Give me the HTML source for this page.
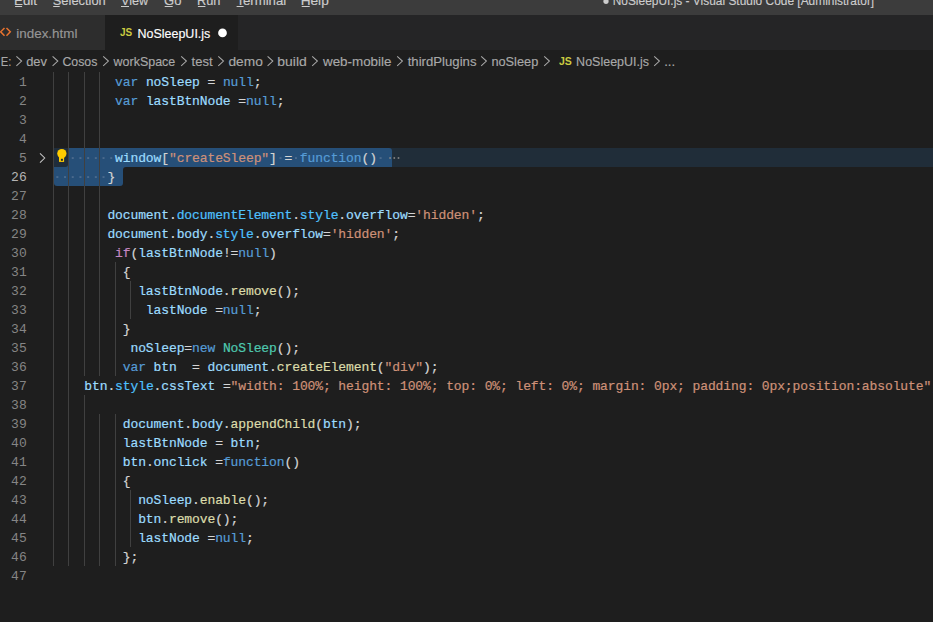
<!DOCTYPE html><html><head><meta charset="utf-8"><style>
*{margin:0;padding:0;box-sizing:border-box}
html,body{width:933px;height:622px;overflow:hidden;background:#1e1e1e}
body{position:relative;font-family:"Liberation Sans",sans-serif}
.a{position:absolute;white-space:pre}
.code{position:absolute;font-family:"Liberation Mono",monospace;font-size:13px;letter-spacing:-0.103px;line-height:19px;white-space:pre;height:19px;-webkit-text-stroke:0.2px}
.ln{position:absolute;left:0;width:26.7px;text-align:right;font-family:"Liberation Mono",monospace;font-size:13px;line-height:19px;color:#858585}
.g{position:absolute;width:1px;background:#404040}
svg{position:absolute;left:0;top:0;overflow:visible}
</style></head><body>
<div class="a" style="left:0;top:0;width:933px;height:15px;background:#3c3c3c"></div>
<div class="a" style="left:0;top:15px;width:933px;height:35px;background:#252526"></div>
<div class="a" style="left:0;top:15px;width:105px;height:35px;background:#2d2d2d"></div>
<div class="a" style="left:105px;top:15px;width:133px;height:35px;background:#1e1e1e"></div>
<div class="a" style="left:53px;top:148px;width:880px;height:19px;background:#202d39"></div>
<div class="a" style="left:68px;top:148px;width:323.6px;height:19px;background:#264f78;border-radius:0 3px 0 0"></div>
<div class="a" style="left:54px;top:167px;width:69px;height:19px;background:#264f78;border-radius:0 0 3px 3px"></div>
<div class="g" style="left:53.00px;top:72px;height:494px"></div>
<div class="g" style="left:68.00px;top:72px;height:494px"></div>
<div class="g" style="left:84.00px;top:72px;height:304px"></div>
<div class="g" style="left:84.00px;top:395px;height:171px"></div>
<div class="g" style="left:99.00px;top:72px;height:304px"></div>
<div class="g" style="left:99.00px;top:414px;height:152px"></div>
<div class="g" style="left:115.00px;top:262px;height:114px"></div>
<div class="g" style="left:115.00px;top:414px;height:152px"></div>
<div class="g" style="left:130.00px;top:281px;height:38px"></div>
<div class="g" style="left:130.00px;top:490px;height:57px"></div>
<div class="ln" style="top:73px">1</div>
<div class="code" style="left:115.08px;top:73px"><span style="color:#569cd6">var</span><span style="color:#d4d4d4"> </span><span style="color:#9cdcfe">noSleep</span><span style="color:#d4d4d4"> = </span><span style="color:#569cd6">null</span><span style="color:#d4d4d4">;</span></div>
<div class="ln" style="top:92px">2</div>
<div class="code" style="left:115.08px;top:92px"><span style="color:#569cd6">var</span><span style="color:#d4d4d4"> </span><span style="color:#9cdcfe">lastBtnNode</span><span style="color:#d4d4d4"> =</span><span style="color:#569cd6">null</span><span style="color:#d4d4d4">;</span></div>
<div class="ln" style="top:111px">3</div>
<div class="ln" style="top:130px">4</div>
<div class="ln" style="top:149px">5</div>
<div class="code" style="left:115.08px;top:149px"><span style="color:#9cdcfe">window</span><span style="color:#d4d4d4">[</span><span style="color:#ce9178">&quot;createSleep&quot;</span><span style="color:#d4d4d4">] = </span><span style="color:#569cd6">function</span><span style="color:#d4d4d4">()</span></div>
<div class="ln" style="top:168px;color:#b4b4b4">26</div>
<div class="code" style="left:107.38px;top:168px"><span style="color:#d4d4d4">}</span></div>
<div class="ln" style="top:187px">27</div>
<div class="ln" style="top:206px">28</div>
<div class="code" style="left:107.38px;top:206px"><span style="color:#9cdcfe">document</span><span style="color:#d4d4d4">.</span><span style="color:#4fc1ff">documentElement</span><span style="color:#d4d4d4">.</span><span style="color:#4fc1ff">style</span><span style="color:#d4d4d4">.</span><span style="color:#9cdcfe">overflow</span><span style="color:#d4d4d4">=</span><span style="color:#ce9178">&#x27;hidden&#x27;</span><span style="color:#d4d4d4">;</span></div>
<div class="ln" style="top:225px">29</div>
<div class="code" style="left:107.38px;top:225px"><span style="color:#9cdcfe">document</span><span style="color:#d4d4d4">.</span><span style="color:#9cdcfe">body</span><span style="color:#d4d4d4">.</span><span style="color:#4fc1ff">style</span><span style="color:#d4d4d4">.</span><span style="color:#9cdcfe">overflow</span><span style="color:#d4d4d4">=</span><span style="color:#ce9178">&#x27;hidden&#x27;</span><span style="color:#d4d4d4">;</span></div>
<div class="ln" style="top:244px">30</div>
<div class="code" style="left:115.08px;top:244px"><span style="color:#c586c0">if</span><span style="color:#d4d4d4">(</span><span style="color:#9cdcfe">lastBtnNode</span><span style="color:#d4d4d4">!=</span><span style="color:#569cd6">null</span><span style="color:#d4d4d4">)</span></div>
<div class="ln" style="top:263px">31</div>
<div class="code" style="left:122.77px;top:263px"><span style="color:#d4d4d4">{</span></div>
<div class="ln" style="top:282px">32</div>
<div class="code" style="left:138.17px;top:282px"><span style="color:#9cdcfe">lastBtnNode</span><span style="color:#d4d4d4">.</span><span style="color:#dcdcaa">remove</span><span style="color:#d4d4d4">();</span></div>
<div class="ln" style="top:301px">33</div>
<div class="code" style="left:145.86px;top:301px"><span style="color:#9cdcfe">lastNode</span><span style="color:#d4d4d4"> =</span><span style="color:#569cd6">null</span><span style="color:#d4d4d4">;</span></div>
<div class="ln" style="top:320px">34</div>
<div class="code" style="left:122.77px;top:320px"><span style="color:#d4d4d4">}</span></div>
<div class="ln" style="top:339px">35</div>
<div class="code" style="left:130.47px;top:339px"><span style="color:#9cdcfe">noSleep</span><span style="color:#d4d4d4">=</span><span style="color:#569cd6">new</span><span style="color:#d4d4d4"> </span><span style="color:#4ec9b0">NoSleep</span><span style="color:#d4d4d4">();</span></div>
<div class="ln" style="top:358px">36</div>
<div class="code" style="left:122.77px;top:358px"><span style="color:#569cd6">var</span><span style="color:#d4d4d4"> </span><span style="color:#9cdcfe">btn</span><span style="color:#d4d4d4">  = </span><span style="color:#9cdcfe">document</span><span style="color:#d4d4d4">.</span><span style="color:#dcdcaa">createElement</span><span style="color:#d4d4d4">(</span><span style="color:#ce9178">&quot;div&quot;</span><span style="color:#d4d4d4">);</span></div>
<div class="ln" style="top:377px">37</div>
<div class="code" style="left:84.29px;top:377px"><span style="color:#9cdcfe">btn</span><span style="color:#d4d4d4">.</span><span style="color:#4fc1ff">style</span><span style="color:#d4d4d4">.</span><span style="color:#9cdcfe">cssText</span><span style="color:#d4d4d4"> =</span><span style="color:#ce9178">&quot;width: 100%; height: 100%; top: 0%; left: 0%; margin: 0px; padding: 0px;position:absolute&quot;</span><span style="color:#d4d4d4">;</span></div>
<div class="ln" style="top:396px">38</div>
<div class="ln" style="top:415px">39</div>
<div class="code" style="left:122.77px;top:415px"><span style="color:#9cdcfe">document</span><span style="color:#d4d4d4">.</span><span style="color:#9cdcfe">body</span><span style="color:#d4d4d4">.</span><span style="color:#dcdcaa">appendChild</span><span style="color:#d4d4d4">(</span><span style="color:#9cdcfe">btn</span><span style="color:#d4d4d4">);</span></div>
<div class="ln" style="top:434px">40</div>
<div class="code" style="left:122.77px;top:434px"><span style="color:#9cdcfe">lastBtnNode</span><span style="color:#d4d4d4"> = </span><span style="color:#9cdcfe">btn</span><span style="color:#d4d4d4">;</span></div>
<div class="ln" style="top:453px">41</div>
<div class="code" style="left:122.77px;top:453px"><span style="color:#9cdcfe">btn</span><span style="color:#d4d4d4">.</span><span style="color:#9cdcfe">onclick</span><span style="color:#d4d4d4"> =</span><span style="color:#569cd6">function</span><span style="color:#d4d4d4">()</span></div>
<div class="ln" style="top:472px">42</div>
<div class="code" style="left:122.77px;top:472px"><span style="color:#d4d4d4">{</span></div>
<div class="ln" style="top:491px">43</div>
<div class="code" style="left:138.17px;top:491px"><span style="color:#9cdcfe">noSleep</span><span style="color:#d4d4d4">.</span><span style="color:#dcdcaa">enable</span><span style="color:#d4d4d4">();</span></div>
<div class="ln" style="top:510px">44</div>
<div class="code" style="left:138.17px;top:510px"><span style="color:#9cdcfe">btn</span><span style="color:#d4d4d4">.</span><span style="color:#dcdcaa">remove</span><span style="color:#d4d4d4">();</span></div>
<div class="ln" style="top:529px">45</div>
<div class="code" style="left:138.17px;top:529px"><span style="color:#9cdcfe">lastNode</span><span style="color:#d4d4d4"> =</span><span style="color:#569cd6">null</span><span style="color:#d4d4d4">;</span></div>
<div class="ln" style="top:548px">46</div>
<div class="code" style="left:122.77px;top:548px"><span style="color:#d4d4d4">};</span></div>
<div class="ln" style="top:567px">47</div>
<svg width="933" height="622" viewBox="0 0 933 622">
<text transform="translate(14.06,5.0) scale(1.0219,1)" font-family="Liberation Sans" font-size="13" fill="#cccccc" stroke="#cccccc" stroke-width="0.15">Edit</text>
<text transform="translate(52.80,5.0) scale(0.9896,1)" font-family="Liberation Sans" font-size="13" fill="#cccccc" stroke="#cccccc" stroke-width="0.15">Selection</text>
<text transform="translate(121.00,5.0) scale(0.9751,1)" font-family="Liberation Sans" font-size="13" fill="#cccccc" stroke="#cccccc" stroke-width="0.15">View</text>
<text transform="translate(164.09,5.0) scale(1.0058,1)" font-family="Liberation Sans" font-size="13" fill="#cccccc" stroke="#cccccc" stroke-width="0.15">Go</text>
<text transform="translate(196.90,5.0) scale(0.9863,1)" font-family="Liberation Sans" font-size="13" fill="#cccccc" stroke="#cccccc" stroke-width="0.15">Run</text>
<text transform="translate(236.39,5.0) scale(1.0153,1)" font-family="Liberation Sans" font-size="13" fill="#cccccc" stroke="#cccccc" stroke-width="0.15">Terminal</text>
<text transform="translate(300.63,5.0) scale(1.0518,1)" font-family="Liberation Sans" font-size="13" fill="#cccccc" stroke="#cccccc" stroke-width="0.15">Help</text>
<text transform="translate(612.67,5.0) scale(0.9175,1)" font-family="Liberation Sans" font-size="13" fill="#cccccc" stroke="#cccccc" stroke-width="0.15">NoSleepUI.js - Visual Studio Code [Administrator]</text>
<text transform="translate(16.26,37.6) scale(1.0334,1)" font-family="Liberation Sans" font-size="13" fill="#969696" stroke="#969696" stroke-width="0.15">index.html</text>
<text transform="translate(137.52,37.6) scale(0.9604,1)" font-family="Liberation Sans" font-size="13" fill="#ffffff" stroke="#ffffff" stroke-width="0.15">NoSleepUI.js</text>
<text transform="translate(0.72,65.6) scale(0.8620,1)" font-family="Liberation Sans" font-size="13" fill="#a9a9a9" stroke="#a9a9a9" stroke-width="0.15">E:</text>
<text transform="translate(26.20,65.6) scale(0.9925,1)" font-family="Liberation Sans" font-size="13" fill="#a9a9a9" stroke="#a9a9a9" stroke-width="0.15">dev</text>
<text transform="translate(62.42,65.6) scale(0.9489,1)" font-family="Liberation Sans" font-size="13" fill="#a9a9a9" stroke="#a9a9a9" stroke-width="0.15">Cosos</text>
<text transform="translate(113.59,65.6) scale(0.9596,1)" font-family="Liberation Sans" font-size="13" fill="#a9a9a9" stroke="#a9a9a9" stroke-width="0.15">workSpace</text>
<text transform="translate(191.60,65.6) scale(1.0001,1)" font-family="Liberation Sans" font-size="13" fill="#a9a9a9" stroke="#a9a9a9" stroke-width="0.15">test</text>
<text transform="translate(228.47,65.6) scale(1.0574,1)" font-family="Liberation Sans" font-size="13" fill="#a9a9a9" stroke="#a9a9a9" stroke-width="0.15">demo</text>
<text transform="translate(277.33,65.6) scale(1.0724,1)" font-family="Liberation Sans" font-size="13" fill="#a9a9a9" stroke="#a9a9a9" stroke-width="0.15">build</text>
<text transform="translate(323.01,65.6) scale(1.0310,1)" font-family="Liberation Sans" font-size="13" fill="#a9a9a9" stroke="#a9a9a9" stroke-width="0.15">web-mobile</text>
<text transform="translate(407.70,65.6) scale(1.0130,1)" font-family="Liberation Sans" font-size="13" fill="#a9a9a9" stroke="#a9a9a9" stroke-width="0.15">thirdPlugins</text>
<text transform="translate(491.40,65.6) scale(0.9834,1)" font-family="Liberation Sans" font-size="13" fill="#a9a9a9" stroke="#a9a9a9" stroke-width="0.15">noSleep</text>
<text transform="translate(576.12,65.6) scale(0.9618,1)" font-family="Liberation Sans" font-size="13" fill="#a9a9a9" stroke="#a9a9a9" stroke-width="0.15">NoSleepUI.js</text>
<text transform="translate(664.17,65.6) scale(1.0179,1)" font-family="Liberation Sans" font-size="13" fill="#a9a9a9" stroke="#a9a9a9" stroke-width="0.15">...</text>
<rect x="15.1" y="6" width="7" height="1" fill="#cccccc"/>
<rect x="53.2" y="6" width="6.5" height="1" fill="#cccccc"/>
<rect x="121.0" y="6" width="8" height="1" fill="#cccccc"/>
<rect x="164.7" y="6" width="8" height="1" fill="#cccccc"/>
<rect x="197.9" y="6" width="7.5" height="1" fill="#cccccc"/>
<rect x="236.6" y="6" width="7" height="1" fill="#cccccc"/>
<rect x="301.7" y="6" width="8" height="1" fill="#cccccc"/>
<circle cx="606" cy="1.3" r="2.6" fill="#cccccc"/>
<path d="M4.5 27.9 L0.7 31.8 L4.5 35.7 M6.5 27.9 L10.3 31.8 L6.5 35.7" fill="none" stroke="#e8732f" stroke-width="1.5"/>
<text x="120" y="36" font-family="Liberation Sans" font-weight="bold" font-size="10.5" fill="#cbcb41" transform="translate(120,0) scale(0.95,1) translate(-120,0)">JS</text>
<circle cx="222.5" cy="32.9" r="4.35" fill="#ffffff"/>
<path d="M16.400000000000002 56.4 L21.6 61.1 L16.400000000000002 65.8" fill="none" stroke="#a9a9a9" stroke-width="1.05"/>
<path d="M52.6 56.4 L57.8 61.1 L52.6 65.8" fill="none" stroke="#a9a9a9" stroke-width="1.05"/>
<path d="M103.19999999999999 56.4 L108.39999999999999 61.1 L103.19999999999999 65.8" fill="none" stroke="#a9a9a9" stroke-width="1.05"/>
<path d="M181.2 56.4 L186.4 61.1 L181.2 65.8" fill="none" stroke="#a9a9a9" stroke-width="1.05"/>
<path d="M218.29999999999998 56.4 L223.5 61.1 L218.29999999999998 65.8" fill="none" stroke="#a9a9a9" stroke-width="1.05"/>
<path d="M267.6 56.4 L272.8 61.1 L267.6 65.8" fill="none" stroke="#a9a9a9" stroke-width="1.05"/>
<path d="M312.20000000000005 56.4 L317.40000000000003 61.1 L312.20000000000005 65.8" fill="none" stroke="#a9a9a9" stroke-width="1.05"/>
<path d="M397.20000000000005 56.4 L402.40000000000003 61.1 L397.20000000000005 65.8" fill="none" stroke="#a9a9a9" stroke-width="1.05"/>
<path d="M481.20000000000005 56.4 L486.40000000000003 61.1 L481.20000000000005 65.8" fill="none" stroke="#a9a9a9" stroke-width="1.05"/>
<path d="M544.2 56.4 L549.4 61.1 L544.2 65.8" fill="none" stroke="#a9a9a9" stroke-width="1.05"/>
<path d="M654.2 56.4 L659.4 61.1 L654.2 65.8" fill="none" stroke="#a9a9a9" stroke-width="1.05"/>
<text x="559" y="65" font-family="Liberation Sans" font-weight="bold" font-size="10.5" fill="#cbcb41">JS</text>
<rect x="71.74" y="157.2" width="2" height="1.7" fill="#4f6d8f"/>
<rect x="79.44" y="157.2" width="2" height="1.7" fill="#4f6d8f"/>
<rect x="87.14" y="157.2" width="2" height="1.7" fill="#4f6d8f"/>
<rect x="94.83" y="157.2" width="2" height="1.7" fill="#4f6d8f"/>
<rect x="102.53" y="157.2" width="2" height="1.7" fill="#4f6d8f"/>
<rect x="110.23" y="157.2" width="2" height="1.7" fill="#4f6d8f"/>
<rect x="279.56" y="157.2" width="2" height="1.7" fill="#4f6d8f"/>
<rect x="294.96" y="157.2" width="2" height="1.7" fill="#4f6d8f"/>
<rect x="379.62" y="157.2" width="2" height="1.7" fill="#4f6d8f"/>
<rect x="56.35" y="176.2" width="2" height="1.7" fill="#4f6d8f"/>
<rect x="64.05" y="176.2" width="2" height="1.7" fill="#4f6d8f"/>
<rect x="71.74" y="176.2" width="2" height="1.7" fill="#4f6d8f"/>
<rect x="79.44" y="176.2" width="2" height="1.7" fill="#4f6d8f"/>
<rect x="87.14" y="176.2" width="2" height="1.7" fill="#4f6d8f"/>
<rect x="94.83" y="176.2" width="2" height="1.7" fill="#4f6d8f"/>
<rect x="102.53" y="176.2" width="2" height="1.7" fill="#4f6d8f"/>
<rect x="389.3" y="157.2" width="1.6" height="1.6" fill="#8a8a8a"/>
<rect x="393.5" y="157.2" width="1.6" height="1.6" fill="#8a8a8a"/>
<rect x="397.7" y="157.2" width="1.6" height="1.6" fill="#8a8a8a"/>
<path d="M40 153.3 L44.7 158 L40 162.7" fill="none" stroke="#c5c5c5" stroke-width="1.05"/>
<rect x="64" y="163" width="4" height="4" fill="#264f78"/>
<path d="M54 148 H68 V164.3 A2.7 2.7 0 0 1 65.3 167 H54 Z" fill="#1f2d3b"/>
<circle cx="61.85" cy="153.6" r="4.65" fill="#ffcc00"/><rect x="59" y="156.5" width="5.1" height="5.4" fill="#ffcc00"/><rect x="60.9" y="158.8" width="2" height="2" fill="#1a2a30"/>
<path d="M123 167 h3 a3 3 0 0 0 -3 3 z" fill="#264f78"/>
</svg>
</body></html>
